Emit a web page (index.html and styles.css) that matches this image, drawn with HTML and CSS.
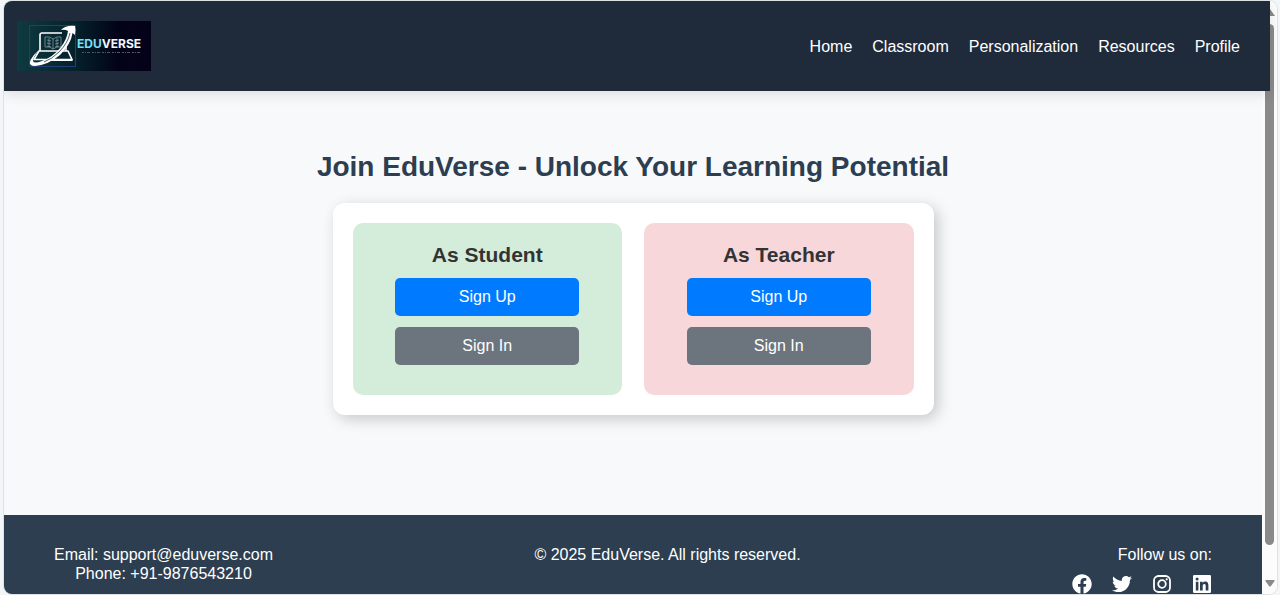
FILE: index.html
```html
<!DOCTYPE html>
<html lang="en">
<head>
<meta charset="utf-8">
<meta name="viewport" content="width=device-width, initial-scale=1">
<title>EduVerse</title>
<link rel="stylesheet" href="styles.css">
</head>
<body>
<div class="window">
  <div class="page">
    <header class="header">
      <a class="logo" href="#" aria-label="EduVerse">
        <svg width="134" height="50" viewBox="0 0 134 50">
          <defs>
            <linearGradient id="logo-bg"><stop offset="0" stop-color="#0e3b40"/><stop offset=".45" stop-color="#04202a"/><stop offset=".75" stop-color="#030318"/><stop offset="1" stop-color="#03021a"/></linearGradient>
            <linearGradient id="logo-edu"><stop offset="0" stop-color="#6be3f5"/><stop offset="1" stop-color="#a5dcfa"/></linearGradient>
          </defs>
          <rect width="134" height="50" fill="url(#logo-bg)"/>
          <rect x="12.500" y="4.500" width="46" height="41" fill="none" stroke="#243d74"/>
          <path d="M23 30V14q0-2 2-2h20M49 20v10" fill="none" stroke="#fff" stroke-width="1.600"/>
          <path d="M22 30h29l4 8.500H17z" fill="none" stroke="#fff" stroke-width="1.600" stroke-linejoin="round"/>
          <path d="M30 39h25.500" stroke="#fff" stroke-width="2.200"/>
          <path d="M28 16q5-1 8 2 4-3 8-2v10q-4-1-8 2-3-3-8-2zM36 18v10M30 19l4 1M30 22l4 1M30 25l4 1M38 20l4-1M38 23l4-1M38 26l4-1M32 17v9M40 17v9" fill="none" stroke="#8295a0" stroke-width=".8"/>
          <path d="M44 9Q49 4 58 5Q59 9 58 14L55.500 12Q54 23 43 34Q31 44 18 45Q11 45 13.500 39Q16 34 22 29Q16 36 16 40Q17 43 25 40Q36 36 44 26Q50 18 51 10Q48 8 44 9z" fill="#fff"/>
          <path d="M53 12Q51 22 42 31Q35 38 27 41" fill="none" stroke="#04202a" stroke-width=".7"/>
          <text class="logo-name" x="60" y="27" fill="#f4f6fa"><tspan fill="url(#logo-edu)">EDU</tspan>VERSE</text>
          <path d="M65 31.500h58" stroke="#465b68" stroke-width="1" stroke-dasharray="2 1 1 1 3 2"/>
        </svg>
      </a>
      <nav class="nav">
        <a href="#">Home</a>
        <a href="#">Classroom</a>
        <a href="#">Personalization</a>
        <a href="#">Resources</a>
        <a href="#">Profile</a>
      </nav>
    </header>

    <main class="main">
      <h1 class="title">Join EduVerse - Unlock Your Learning Potential</h1>
      <div class="card">
        <section class="role role-student">
          <h2>As Student</h2>
          <button class="btn btn-primary" type="button">Sign Up</button>
          <button class="btn btn-secondary" type="button">Sign In</button>
        </section>
        <section class="role role-teacher">
          <h2>As Teacher</h2>
          <button class="btn btn-primary" type="button">Sign Up</button>
          <button class="btn btn-secondary" type="button">Sign In</button>
        </section>
      </div>
    </main>

    <footer class="footer">
      <div class="contact">
        <p>Email: support@eduverse.com</p>
        <p>Phone: +91-9876543210</p>
      </div>
      <p>© 2025 EduVerse. All rights reserved.</p>
      <div class="follow">
        <p>Follow us on:</p>
        <div class="social">
          <a href="#" aria-label="Facebook"><svg viewBox="0 0 512 512"><path d="M504 256C504 119 393 8 256 8S8 119 8 256c0 123.800 90.700 226.400 209.300 245V327.700h-63V256h63v-54.600c0-62.200 37-96.500 93.700-96.500 27.100 0 55.500 4.800 55.500 4.800v61h-31.300c-30.800 0-40.400 19.100-40.400 38.700V256h68.800l-11 71.700h-57.800V501C413.300 482.400 504 379.800 504 256z"/></svg></a>
          <a href="#" aria-label="Twitter"><svg viewBox="0 0 512 512"><path d="M459.400 151.700c.3 4.500.3 9.100.3 13.600 0 138.700-105.600 298.600-298.600 298.600-59.500 0-114.700-17.200-161.100-47.100 8.400 1 16.600 1.300 25.300 1.300 49.100 0 94.200-16.600 130.300-44.800-46.100-1-84.800-31.200-98.100-72.800 6.500 1 13 1.600 19.800 1.600 9.400 0 18.800-1.300 27.600-3.600-48.100-9.700-84.100-52-84.100-103v-1.300c14 7.800 30.200 12.700 47.400 13.300-28.300-18.800-46.800-51-46.800-87.400 0-19.500 5.200-37.400 14.300-53 51.700 63.700 129.300 105.300 216.400 109.800-1.600-7.800-2.600-15.900-2.600-24 0-57.800 46.800-104.900 104.900-104.900 30.200 0 57.500 12.700 76.700 33.100 23.700-4.500 46.500-13.300 66.600-25.300-7.800 24.400-24.400 44.800-46.100 57.800 21.100-2.300 41.600-8.100 60.400-16.200-14.300 20.800-32.200 39.300-52.600 54.300z"/></svg></a>
          <a href="#" aria-label="Instagram"><svg viewBox="0 0 20 20"><rect x="2" y="2" width="16" height="16" rx="4.500" fill="none" stroke="#fff" stroke-width="1.800"/><circle cx="10" cy="10" r="3.800" fill="none" stroke="#fff" stroke-width="1.800"/><circle cx="14.700" cy="5.300" r="1.100"/></svg></a>
          <a href="#" aria-label="LinkedIn"><svg viewBox="0 0 20 20"><path fill-rule="evenodd" d="M2.300 1h15.500a1.200 1.200 0 0 1 1.200 1.300v15.400a1.200 1.200 0 0 1-1.200 1.300H2.300A1.300 1.300 0 0 1 1 17.700V2.300A1.300 1.300 0 0 1 2.300 1zM3.800 7.800v8.600h2.600V7.800zM5.100 3.600a1.500 1.500 0 1 0 0 3 1.500 1.500 0 0 0 0-3zM8 7.800v8.600h2.700v-4.300c0-1.100.3-2.200 1.600-2.200 1.400 0 1.400 1.300 1.400 2.300v4.200h2.700v-4.700c0-2.400-.5-4.100-3.200-4.100-1.300 0-2.200.7-2.500 1.400V7.800z"/></svg></a>
        </div>
      </div>
    </footer>
  </div>

  <div class="scrollbar" aria-hidden="true">
    <svg width="10" height="7" viewBox="0 0 10 7"><path d="M5 0l5 7H0z"/></svg>
    <div class="track"><div class="thumb"></div></div>
    <svg width="10" height="7" viewBox="0 0 10 7"><path d="M1 0h8q1 0 .6 1L6 6q-1 1-2 0L.4 1Q0 0 1 0z"/></svg>
  </div>
</div>
</body>
</html>
```
FILE: styles.css
```css
* {
  box-sizing: border-box;
}

body {
  margin: 0;
  padding: 1px 3px 1px 4px;
  background: #f3f6f8;
  font-family: "Liberation Sans", Arial, sans-serif;
  font-size: 16px;
  line-height: 19px;
}

h1,
h2,
p {
  margin: 0;
}

.window {
  display: flex;
  min-height: calc(100vh - 2px);
  border-radius: 8px;
  overflow: hidden;
  box-shadow: 0 0 0 1px #dfe2e4;
}

.page {
  flex: 1;
  min-width: 0;
  display: flex;
  flex-direction: column;
  background: #f8f9fb;
}

/* The header runs over part of the scrollbar track. */
.header {
  position: relative;
  z-index: 1;
  display: flex;
  align-items: center;
  justify-content: space-between;
  margin-right: -8px;
  padding: 20px 30px 20px 13px;
  background: #1f2a3a;
  box-shadow: 0 4px 12px rgba(0, 0, 0, 0.1);
}

.logo,
.logo svg {
  display: block;
}

.logo-name {
  font-family: Inter, "Open Sans", sans-serif;
  font-size: 12px;
  font-weight: 700;
}

.nav {
  display: flex;
  gap: 20px;
}

.nav a {
  color: #fff;
  text-decoration: none;
}

.main {
  flex: 1;
  display: flex;
  flex-direction: column;
  align-items: center;
  padding: 60px 20px 100px;
}

.title {
  margin-bottom: 20px;
  color: #2c3e50;
  font-size: 28px;
  line-height: 32px;
}

.card {
  display: flex;
  gap: 22px;
  width: 100%;
  max-width: 601px;
  padding: 20px;
  background: #fff;
  border-radius: 12px;
  box-shadow: 4px 4px 15px rgba(0, 0, 0, 0.2);
}

.role {
  flex: 1;
  display: flex;
  flex-direction: column;
  align-items: center;
  padding: 20px 20px 30px;
  border-radius: 10px;
}

.role-student {
  background: #d4edda;
}

.role-teacher {
  background: #f8d7da;
}

.role h2 {
  margin-bottom: 11px;
  color: #333;
  font-size: 21px;
  line-height: 24px;
}

.btn {
  width: 80%;
  padding: 10px;
  border: 0;
  border-radius: 5px;
  color: #fff;
  font: inherit;
  line-height: 18px;
  cursor: pointer;
}

.btn + .btn {
  margin-top: 11px;
}

.btn-primary {
  background: #007bff;
}

.btn-secondary {
  background: #6c757d;
}

.footer {
  display: flex;
  justify-content: space-between;
  padding: 30px 50px 0;
  background: #2c3e50;
  color: #fff;
}

.contact {
  text-align: center;
}

.follow {
  padding-left: 10px;
  text-align: right;
}

.social {
  display: flex;
  gap: 20px;
  margin-top: 10px;
}

.social a,
.social svg {
  display: block;
  width: 20px;
  height: 20px;
  fill: #fff;
}

.scrollbar {
  flex: none;
  width: 15px;
  display: flex;
  flex-direction: column;
  align-items: center;
  gap: 8px;
  padding: 8px 0 7px;
  background: #fcfcfc;
  fill: #8a8a8a;
}

.track {
  flex: 1;
}

.thumb {
  width: 9px;
  height: 95%;
  border-radius: 5px;
  background: #8a8a8a;
}
```
